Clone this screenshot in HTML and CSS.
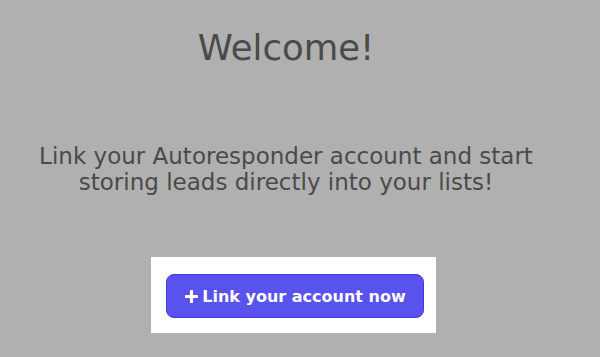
FILE: index.html
```html
<!DOCTYPE html>
<html lang="en">
<head>
<meta charset="utf-8">
<title>Welcome</title>
<link rel="stylesheet" href="styles.css">
</head>
<body>
<main class="page">
  <section class="intro">
    <h1 class="title">Welcome!</h1>
    <p class="lead">Link your Autoresponder account and start<br>storing leads directly into your lists!</p>
  </section>
  <div class="action">
    <button class="link-btn" type="button">
      <svg class="plus" viewBox="0 0 13 13" width="13" height="13" aria-hidden="true"><path d="M6.5 1.2v10.6M1.2 6.5h10.6" stroke="#fff" stroke-width="3.2" stroke-linecap="round"/></svg>
      <span>Link your account now</span>
    </button>
  </div>
</main>
</body>
</html>
```
FILE: styles.css
```css
html, body {
  margin: 0;
  padding: 0;
  height: 100%;
}
body {
  background: #b0b0b0;
  font-family: "DejaVu Sans", "Noto Sans", sans-serif;
  color: #4a4a4a;
}
.page {
  display: flex;
  flex-direction: column;
  align-items: center;
}
.intro {
  width: 572px;
  margin-right: 28px;
  text-align: center;
}
.title {
  margin: 24px 0 0;
  font-size: 35.5px;
  font-weight: 400;
  line-height: 48px;
}
.lead {
  margin: 71px 0 0;
  font-size: 23px;
  font-weight: 400;
  line-height: 26px;
}
.action {
  margin: 62px 13px 0 0;
  background: #ffffff;
  padding: 17px 12px 15px 15px;
  display: flex;
}
.link-btn {
  width: 258px;
  height: 44px;
  box-sizing: border-box;
  background: #5a52ec;
  border: 1px solid #4037e6;
  border-radius: 8px;
  color: #ffffff;
  font-family: "DejaVu Sans", "Noto Sans", sans-serif;
  font-weight: 700;
  font-size: 16px;
  display: flex;
  align-items: center;
  justify-content: center;
  gap: 4px;
  padding: 0 0 0 1px;
}
.plus {
  display: block;
}
```
